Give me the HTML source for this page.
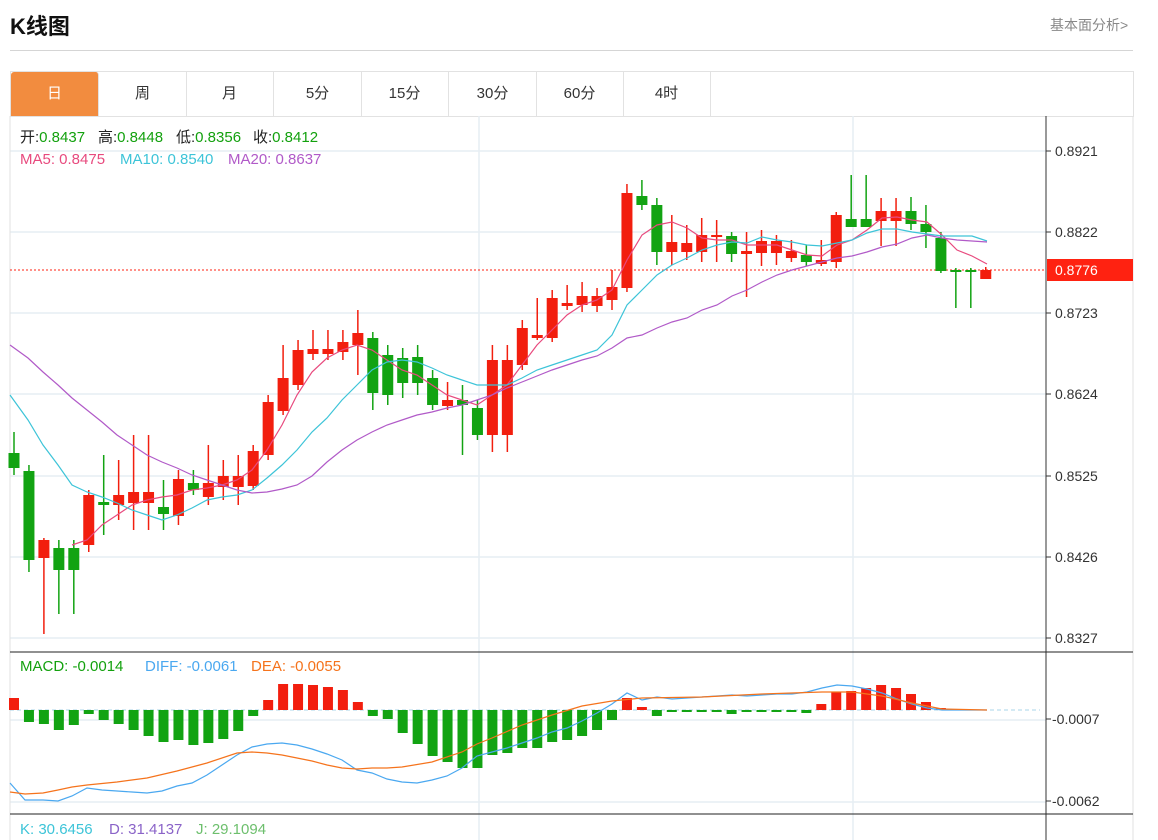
<!DOCTYPE html>
<html><head><meta charset="utf-8"><style>
body{margin:0;background:#fff;font-family:"Liberation Sans","Noto Sans CJK SC",sans-serif;}
.t{position:absolute;left:10px;top:9px;font-size:22px;font-weight:bold;color:#111;}
.r{position:absolute;left:1050px;top:15px;font-size:14px;color:#888;}
.hl{position:absolute;left:10px;top:50px;width:1123px;height:1px;background:#d5d5d5;}
.tabs{position:absolute;left:10px;top:71px;width:1122px;height:44px;border:1px solid #e2e2e2;border-bottom:1px solid #e2e2e2;}
.tab{position:absolute;top:0;height:44px;width:87px;border-right:1px solid #e2e2e2;text-align:center;line-height:44px;font-size:15px;color:#333;}
</style></head><body>
<div class="t">K线图</div><div class="r">基本面分析&gt;</div><div class="hl"></div>
<div class="tabs">
<div class="tab" style="left:0;background:#f28c3f;color:#fff;border-radius:3px 3px 0 0">日</div>
<div class="tab" style="left:88px">周</div>
<div class="tab" style="left:175px">月</div>
<div class="tab" style="left:263px">5分</div>
<div class="tab" style="left:350px">15分</div>
<div class="tab" style="left:438px">30分</div>
<div class="tab" style="left:525px">60分</div>
<div class="tab" style="left:612px">4时</div>
</div>
<svg id="s" width="1158" height="840" style="position:absolute;left:0;top:0" xmlns="http://www.w3.org/2000/svg" font-family="Liberation Sans, Noto Sans CJK SC, sans-serif">
<g stroke="#e6eef4" stroke-width="1.5">
<line x1="10" y1="151" x2="1046" y2="151"/><line x1="10" y1="232" x2="1046" y2="232"/><line x1="10" y1="313" x2="1046" y2="313"/><line x1="10" y1="394" x2="1046" y2="394"/><line x1="10" y1="476" x2="1046" y2="476"/><line x1="10" y1="557" x2="1046" y2="557"/><line x1="10" y1="638" x2="1046" y2="638"/>
<line x1="10" y1="720" x2="1046" y2="720"/><line x1="10" y1="802" x2="1046" y2="802"/>
<line x1="479" y1="116" x2="479" y2="840"/><line x1="853" y1="116" x2="853" y2="840"/>
</g>
<line x1="10" y1="116" x2="10" y2="840" stroke="#e2e2e2"/>
<line x1="1133" y1="116" x2="1133" y2="840" stroke="#e2e2e2"/>
<line x1="1046" y1="116" x2="1046" y2="840" stroke="#333"/>
<line x1="10" y1="652" x2="1133" y2="652" stroke="#222"/>
<line x1="10" y1="814" x2="1133" y2="814" stroke="#222"/>
<g stroke="#333"><line x1="1046" y1="151" x2="1051" y2="151"/><line x1="1046" y1="232" x2="1051" y2="232"/><line x1="1046" y1="313" x2="1051" y2="313"/><line x1="1046" y1="394" x2="1051" y2="394"/><line x1="1046" y1="476" x2="1051" y2="476"/><line x1="1046" y1="557" x2="1051" y2="557"/><line x1="1046" y1="638" x2="1051" y2="638"/><line x1="1046" y1="719" x2="1051" y2="719"/><line x1="1046" y1="801" x2="1051" y2="801"/></g>
<g font-size="14" fill="#333">
<text x="1055" y="156">0.8921</text><text x="1055" y="237">0.8822</text><text x="1055" y="318">0.8723</text><text x="1055" y="399">0.8624</text><text x="1055" y="481">0.8525</text><text x="1055" y="562">0.8426</text><text x="1055" y="643">0.8327</text>
<text x="1052" y="724">-0.0007</text><text x="1052" y="806">-0.0062</text>
</g>
<line x1="10" y1="270" x2="1046" y2="270" stroke="#f21" stroke-dasharray="2,2"/>
<rect x="1047" y="259" width="86" height="22" fill="#f21"/>
<text x="1055" y="275" font-size="14" fill="#fff">0.8776</text>
<g id="c"></g>
<line x1="10" y1="710" x2="1040" y2="710" stroke="#a9d4ea" stroke-dasharray="4,3"/>
<g id="m"></g>
<polyline fill="none" stroke="#e84a7e" stroke-width="1.2" points="72,545 87,540 102,525 117,515 132,505 147,500 162,497 177,495 192,490 207,488 222,485 237,480 252,470 267,450 282,425 297,395 312,372 327,358 342,350 357,345 372,350 387,360 402,370 417,375 432,385 447,395 462,400 477,405 492,395 507,385 522,365 537,345 552,330 567,315 582,305 597,300 612,290 627,260 642,235 657,225 672,222 687,228 702,238 717,240 732,240 747,245 762,245 777,245 792,250 807,255 822,256 837,245 852,240 867,230 882,218 897,217 912,220 927,222 942,235 957,250 972,256 987,264"/>
<polyline fill="none" stroke="#3dc4d8" stroke-width="1.2" points="10,395 28,420 43,445 58,465 72,485 87,492 102,497 117,503 132,510 147,515 162,520 177,515 192,508 207,500 222,497 237,495 252,490 267,478 282,465 297,450 312,432 327,418 342,400 357,385 372,370 387,362 402,360 417,362 432,368 447,375 462,380 477,385 492,385 507,385 522,378 537,370 552,365 567,360 582,355 597,350 612,335 627,305 642,290 657,275 672,265 687,258 702,250 717,245 732,242 747,243 762,237 777,240 792,242 807,245 822,246 837,243 852,240 867,233 882,229 897,229 912,232 927,234 942,236 957,236 972,236 987,241"/>
<polyline fill="none" stroke="#b15ac8" stroke-width="1.2" points="10,345 28,358 43,372 58,385 72,398 87,410 102,422 117,435 132,445 147,455 162,462 177,468 192,475 207,480 222,485 237,490 252,493 267,492 282,489 297,485 312,476 327,462 342,450 357,440 372,432 387,425 402,420 417,415 432,412 447,408 462,405 477,400 492,395 507,388 522,382 537,376 552,370 567,365 582,360 597,356 612,348 627,338 642,335 657,328 672,322 687,318 702,310 717,305 732,296 747,290 762,282 777,275 792,270 807,266 822,262 837,258 852,256 867,252 882,247 897,244 912,238 927,235 942,238 957,240 972,241 987,242"/>
<polyline fill="none" stroke="#4aa8f0" stroke-width="1.2" points="10,783 25,800 43,800 58,801 72,796 87,788 102,790 117,791 132,792 147,793 162,791 177,786 192,783 207,775 222,765 237,755 252,747 267,744 282,743 297,745 312,749 327,754 342,760 357,770 372,773 387,779 402,782 417,783 432,780 447,776 462,768 477,756 492,752 507,748 522,743 537,738 552,732 567,728 582,721 597,713 612,704 627,693 642,700 657,697 672,699 687,698 702,697 717,696 732,695 747,696 762,695 777,694 792,694 807,692 822,688 837,685 852,686 867,689 882,693 897,699 912,704 927,708 942,710 987,710"/>
<polyline fill="none" stroke="#f5731c" stroke-width="1.2" points="10,792 25,794 43,793 58,790 72,787 87,785 117,782 147,778 177,771 207,763 237,753 252,752 267,753 282,755 297,758 312,761 327,765 342,768 357,769 372,768 387,768 402,767 432,762 462,752 477,744 492,738 522,725 552,715 582,706 612,701 642,698 702,697 762,694 822,692 852,692 882,696 912,703 942,709 987,710"/>
<g font-size="15">
<text x="20" y="142" fill="#222">开:<tspan fill="#13a10e">0.8437</tspan></text>
<text x="98" y="142" fill="#222">高:<tspan fill="#13a10e">0.8448</tspan></text>
<text x="176" y="142" fill="#222">低:<tspan fill="#13a10e">0.8356</tspan></text>
<text x="253" y="142" fill="#222">收:<tspan fill="#13a10e">0.8412</tspan></text>
<text x="20" y="164" fill="#e84a7e">MA5: 0.8475</text><text x="120" y="164" fill="#3dc4d8">MA10: 0.8540</text><text x="228" y="164" fill="#b15ac8">MA20: 0.8637</text>
<text x="20" y="671" fill="#13a10e">MACD: -0.0014</text><text x="145" y="671" fill="#4aa8f0">DIFF: -0.0061</text><text x="251" y="671" fill="#f5731c">DEA: -0.0055</text>
<text x="20" y="834" fill="#3dc4d8">K: 30.6456</text><text x="109" y="834" fill="#8a63c8">D: 31.4137</text><text x="196" y="834" fill="#6dbf6d">J: 29.1094</text>
</g>
</svg>
<script>
var C=[["g",453,468,432,475],["g",471,560,465,572],["r",540,558,538,634],["g",548,570,540,614],["g",548,570,540,614],["r",495,545,490,552],["g",502,505,455,535],["r",495,505,460,520],["r",492,503,435,530],["r",492,503,435,530],["g",507,514,480,530],["r",479,516,470,525],["g",483,490,470,495],["r",483,497,445,505],["r",476,487,460,500],["r",476,487,455,505],["r",451,486,445,490],["r",402,455,395,460],["r",378,411,345,415],["r",350,385,340,390],["r",349,354,330,360],["r",349,354,330,360],["r",342,352,330,360],["r",333,345,310,375],["g",338,393,332,410],["g",355,395,345,405],["g",358,383,348,398],["g",357,383,345,395],["g",378,405,370,410],["r",400,406,382,410],["g",400,405,385,455],["g",408,435,400,440],["r",360,435,345,452],["r",360,435,345,452],["r",328,365,320,370],["r",335,338,298,340],["r",298,338,290,342],["r",303,306,285,310],["r",296,305,282,312],["r",296,306,288,312],["r",287,300,270,310],["r",193,288,184,292],["g",196,205,180,210],["g",205,252,198,265],["r",242,252,215,265],["r",243,252,225,260],["r",235,252,218,262],["r",235,237,220,262],["g",236,254,232,262],["r",251,254,232,297],["r",241,253,230,266],["r",241,253,235,265],["r",251,258,240,262],["g",255,262,245,266],["r",260,264,240,266],["r",215,262,212,268],["g",219,227,175,227],["g",219,227,175,227],["r",211,221,198,246],["r",211,221,198,246],["g",211,224,197,230],["g",224,232,205,248],["g",238,271,232,273],["g",270,272,268,308],["g",270,272,268,308],["r",270,279,267,279]];
var M=[698,722,724,730,725,714,720,724,730,736,742,740,745,743,739,731,716,700,684,684,685,687,690,702,716,719,733,744,756,762,768,768,755,753,748,748,742,740,736,730,720,698,707,716,712,712,712,712,714,712,712,712,712,713,704,692,691,688,685,688,694,702,708];
var ns="http://www.w3.org/2000/svg",c=document.getElementById("c"),m=document.getElementById("m");
function el(p,a){var e=document.createElementNS(ns,p);for(var k in a)e.setAttribute(k,a[k]);return e;}
C.forEach(function(d,i){var x=14+i*14.95,col=d[0]=="r"?"#f21e0e":"#12a312";
c.appendChild(el("line",{x1:x,x2:x,y1:d[3],y2:d[4],stroke:col,"stroke-width":1.5}));
c.appendChild(el("rect",{x:x-5.5,y:d[1],width:11,height:Math.max(2,d[2]-d[1]),fill:col}));});
M.forEach(function(v,i){var x=14+i*14.95,r=v<710;
m.appendChild(el("rect",{x:x-5,y:Math.min(v,710),width:10,height:Math.max(2,Math.abs(v-710)),fill:r?"#f21e0e":"#12a312"}));});
</script>
</body></html>
